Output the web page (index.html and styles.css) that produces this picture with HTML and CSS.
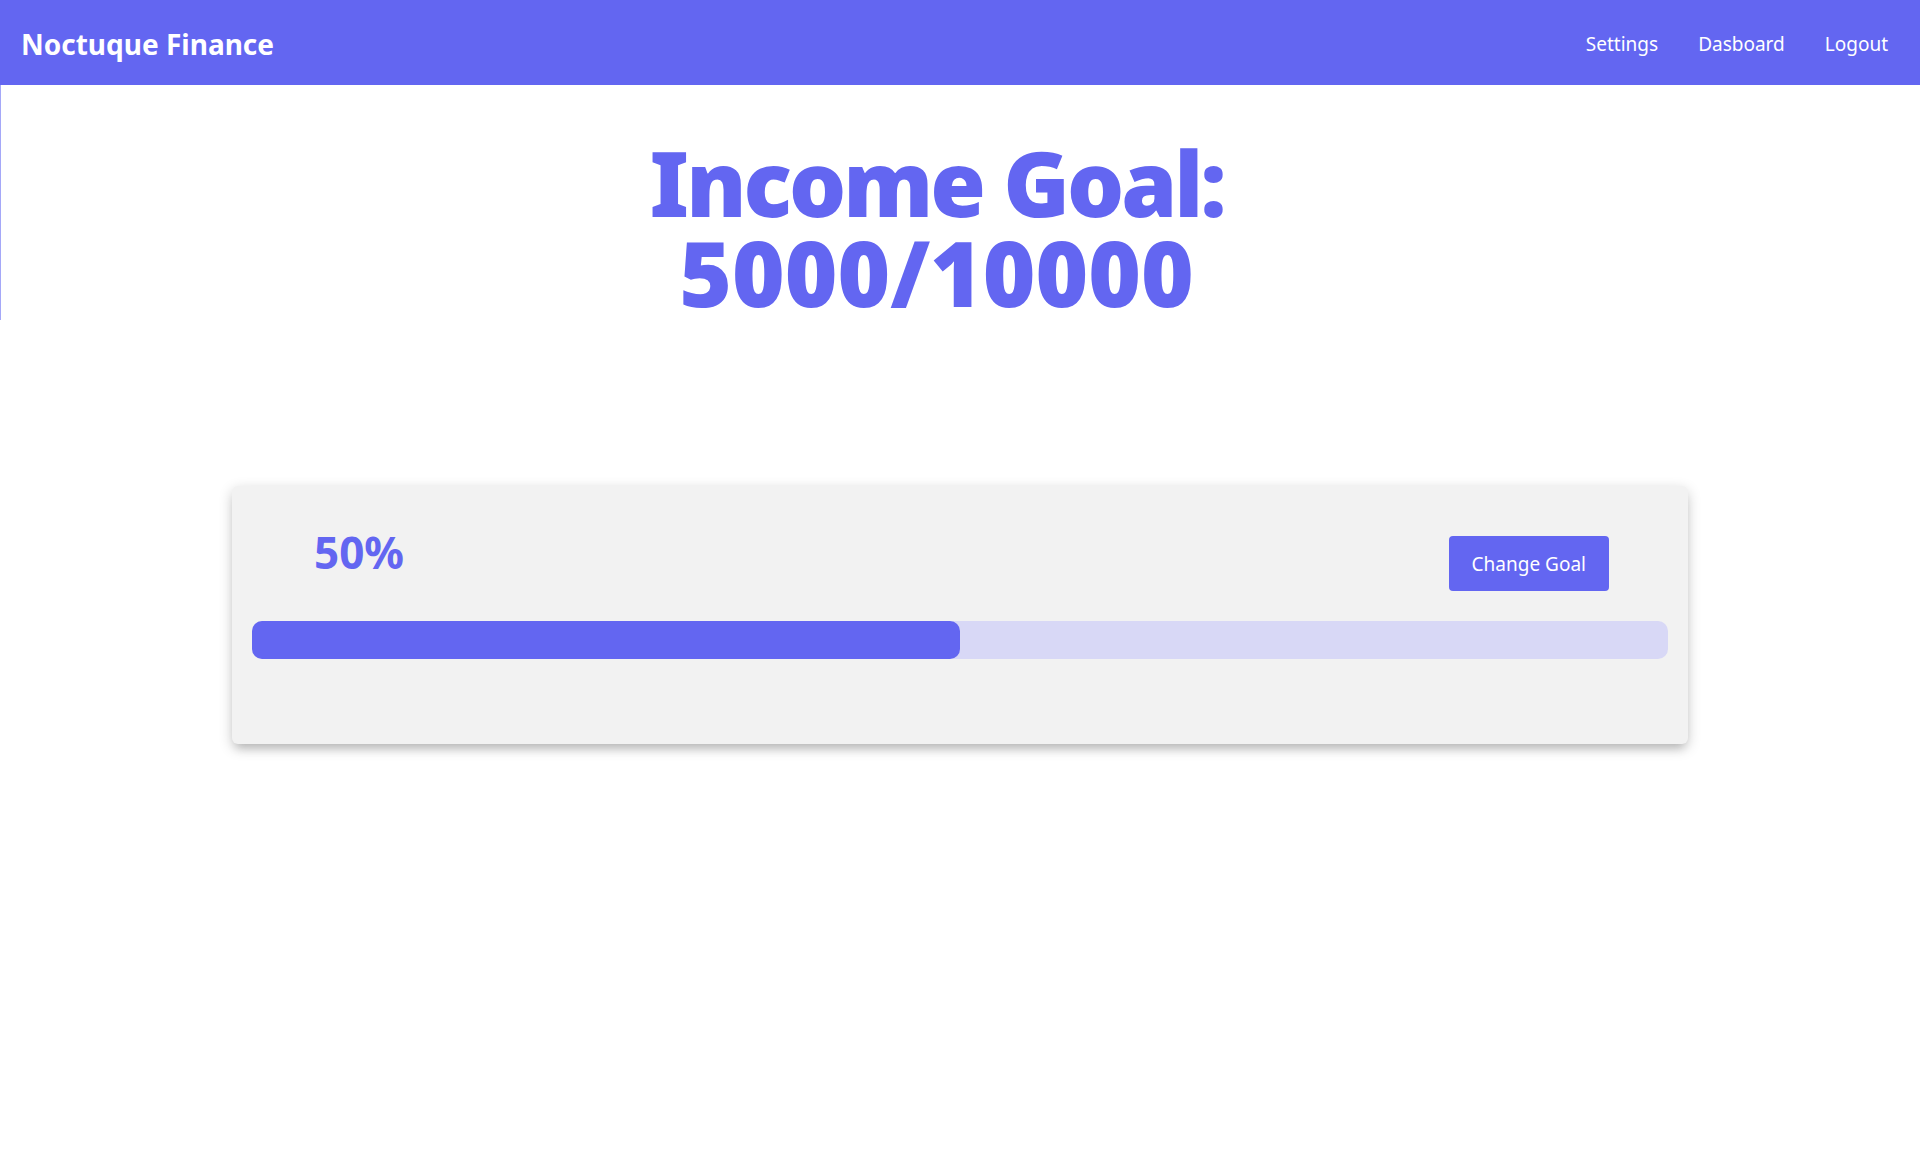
FILE: index.html
```html
<!DOCTYPE html>
<html lang="en">
<head>
<meta charset="utf-8">
<title>Noctuque Finance</title>
<link rel="stylesheet" href="styles.css">
</head>
<body>
<nav class="navbar">
  <div class="brand">Noctuque Finance</div>
  <div class="nav-links">
    <a class="nav-link" href="#">Settings</a>
    <a class="nav-link" href="#">Dasboard</a>
    <a class="nav-link" href="#">Logout</a>
  </div>
</nav>
<main class="main">
  <section class="hero">
    <h1 class="goal-title"><span class="goal-line goal-label">Income Goal:</span><span class="goal-line goal-value">5000/10000</span></h1>
  </section>
  <section class="card">
    <div class="card-top">
      <div class="percent">50%</div>
      <button class="btn">Change Goal</button>
    </div>
    <div class="track"><div class="fill" style="width: 50%"></div></div>
  </section>
</main>
</body>
</html>
```
FILE: styles.css
```css
* { box-sizing: border-box; }
html, body { margin: 0; padding: 0; }
body {
  font-family: "Noto Sans", "Open Sans", sans-serif;
  background: #ffffff;
  height: 1164px;
}
.navbar {
  height: 85px;
  background: #6366f1;
  display: flex;
  align-items: center;
  justify-content: space-between;
  padding: 2px 32px 0 21px;
}
.brand {
  color: #ffffff;
  font-size: 28px;
  font-weight: 700;
}
.nav-links {
  display: flex;
  gap: 40px;
}
.nav-link {
  color: #ffffff;
  text-decoration: none;
  font-size: 19px;
}
.hero {
  width: 1872px;
  height: 235px;
  border-left: 1px solid #a5a8f8;
  padding-top: 52px;
}
.goal-title {
  margin: 0;
  text-align: center;
  font-size: 90px;
  line-height: 90px;
  font-weight: 900;
  color: #6366f1;
}
.goal-line { display: block; }
.goal-label { letter-spacing: -3px; }
.card {
  width: 1456px;
  margin: 166px auto 0;
  background: #f2f2f2;
  border-radius: 6px;
  box-shadow: 0 4px 14px rgba(0, 0, 0, 0.2), 0 8px 10px -4px rgba(0, 0, 0, 0.15);
  padding: 20px 20px 85px;
}
.card-top {
  display: flex;
  justify-content: space-between;
  align-items: flex-start;
  padding: 0 59px 0 62px;
  margin-top: 30px;
}
.percent {
  font-size: 44px;
  font-weight: 700;
  line-height: 32px;
  color: #6366f1;
}
.btn {
  font-family: inherit;
  background: #6366f1;
  color: #ffffff;
  border: none;
  border-radius: 4px;
  height: 55px;
  padding: 0 23px;
  font-size: 19px;
}
.track {
  margin-top: 30px;
  height: 38px;
  border-radius: 10px;
  background: #d8d8f6;
}
.fill {
  height: 100%;
  background: #6366f1;
  border-radius: 10px;
}
```
